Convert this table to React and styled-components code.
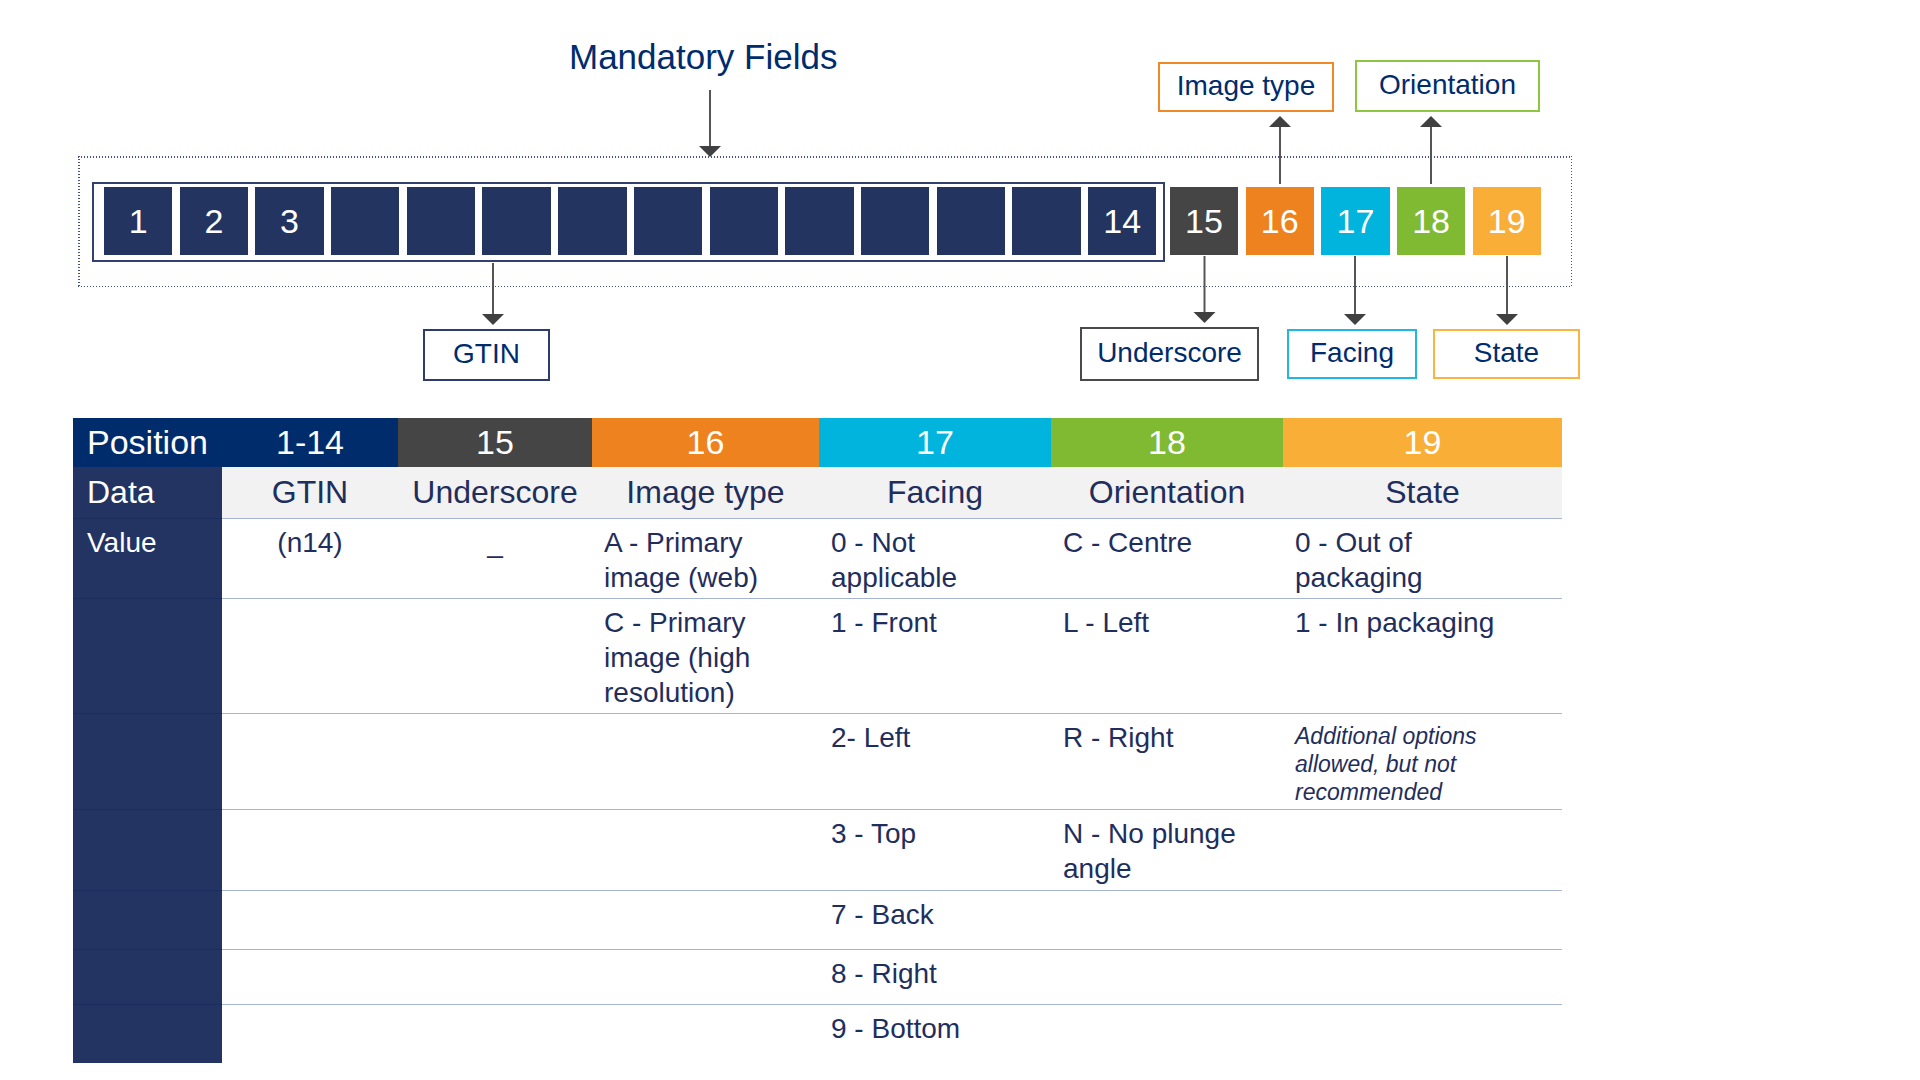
import React from 'react';
import styled, { createGlobalStyle } from 'styled-components';

const BLUE = '#002c6c';
const NAVY = '#233462';
const INK = '#1f2e5c';
const RULE = '#a8b5d2';
const DOT = '#41528a';

const GlobalStyle = createGlobalStyle`
  html, body {
    margin: 0;
    padding: 0;
    background: #ffffff;
  }
  body {
    font-family: "Liberation Sans", Arial, sans-serif;
  }
`;

const positions = [
  { n: 15, color: '#454545' },
  { n: 16, color: '#ee821e' },
  { n: 17, color: '#00b4de' },
  { n: 18, color: '#80ba32' },
  { n: 19, color: '#f9ae37' },
];

const callouts = [
  { text: 'Image type', left: 1158, top: 62, width: 176, height: 50, border: '#f0892a' },
  { text: 'Orientation', left: 1355, top: 60, width: 185, height: 52, border: '#8dc641' },
  { text: 'GTIN', left: 423, top: 329, width: 127, height: 52, border: '#2d3c6c' },
  { text: 'Underscore', left: 1080, top: 327, width: 179, height: 54, border: '#4a4a4a' },
  { text: 'Facing', left: 1287, top: 329, width: 130, height: 50, border: '#21b8e0' },
  { text: 'State', left: 1433, top: 329, width: 147, height: 50, border: '#f9b441' },
];

// x, start of the shaft, tip of the head
const arrows = [
  { x: 710, from: 90, to: 157 },
  { x: 493, from: 263, to: 325 },
  { x: 1204.5, from: 256, to: 323 },
  { x: 1355, from: 256, to: 325 },
  { x: 1507, from: 256, to: 325 },
  { x: 1280, from: 184, to: 116 },
  { x: 1431, from: 184, to: 116 },
];

const header = [
  { text: 'Position', bg: BLUE, left: true },
  { text: '1-14', bg: BLUE },
  ...positions.map((p) => ({ text: String(p.n), bg: p.color })),
];

const dataRow = ['GTIN', 'Underscore', 'Image type', 'Facing', 'Orientation', 'State'];

const valueRows = [
  ['(n14)', '_', 'A - Primary\nimage (web)', '0 - Not\napplicable', 'C - Centre', '0 - Out of\npackaging'],
  ['', '', 'C - Primary\nimage (high\nresolution)', '1 - Front', 'L - Left', '1 - In packaging'],
  ['', '', '', '2- Left', 'R - Right', { note: 'Additional options\nallowed, but not\nrecommended' }],
  ['', '', '', '3 - Top', 'N - No plunge\nangle', ''],
  ['', '', '', '7 - Back', '', ''],
  ['', '', '', '8 - Right', '', ''],
  ['', '', '', '9 - Bottom', '', ''],
];

const Arrow = ({ x, from, to }) => {
  const down = to > from;
  const base = down ? to - 11 : to + 11;
  return (
    <g>
      <line x1={x} y1={from} x2={x} y2={base} stroke="#555555" strokeWidth="2" />
      <polygon points={`${x - 11},${base} ${x + 11},${base} ${x},${to}`} fill="#404040" />
    </g>
  );
};

const App = () => {
  return (
    <Page>
      <GlobalStyle />
      <Diagram>
        <Title>Mandatory Fields</Title>
        <Frame>
          <Group>
            {Array.from({ length: 14 }, (_, i) => (
              <Cell key={i} $bg="#233461">
                {i < 3 || i === 13 ? i + 1 : ''}
              </Cell>
            ))}
          </Group>
          <Extras>
            {positions.map((p) => (
              <Cell key={p.n} $bg={p.color}>
                {p.n}
              </Cell>
            ))}
          </Extras>
        </Frame>
        {callouts.map((c) => (
          <Callout
            key={c.text}
            $left={c.left}
            $top={c.top}
            $width={c.width}
            $height={c.height}
            $border={c.border}
          >
            {c.text}
          </Callout>
        ))}
        <ArrowLayer width="1920" height="418" viewBox="0 0 1920 418">
          {arrows.map((a, i) => (
            <Arrow key={i} {...a} />
          ))}
        </ArrowLayer>
      </Diagram>

      <Table>
        {header.map((h) => (
          <HeadCell key={h.text} $bg={h.bg} $left={h.left}>
            {h.text}
          </HeadCell>
        ))}

        <DataCell $label>Data</DataCell>
        {dataRow.map((d) => (
          <DataCell key={d}>{d}</DataCell>
        ))}

        {valueRows.map((row, r) => {
          const last = r === valueRows.length - 1;
          return (
            <React.Fragment key={r}>
              <ValueCell $label $last={last}>
                {r === 0 ? 'Value' : ''}
              </ValueCell>
              {row.map((v, c) => (
                <ValueCell key={c} $last={last} $center={c < 2}>
                  {typeof v === 'object' ? <Note>{v.note}</Note> : v}
                </ValueCell>
              ))}
            </React.Fragment>
          );
        })}
      </Table>
    </Page>
  );
};

const Page = styled.div`
  width: 1920px;
  height: 1080px;
  overflow: hidden;
  background: #ffffff;
`;

const Diagram = styled.div`
  position: relative;
  box-sizing: border-box;
  height: 417.5px;
  padding-top: 156px;
`;

const Title = styled.div`
  position: absolute;
  left: 569px;
  top: 39px;
  font-size: 35px;
  line-height: 35px;
  color: ${BLUE};
  white-space: nowrap;
`;

const Frame = styled.div`
  box-sizing: border-box;
  margin-left: 78px;
  width: 1494px;
  height: 131px;
  padding: 26px 0 0 14px;
  display: flex;
  align-items: flex-start;
  background:
    linear-gradient(to right, ${DOT} 1.5px, transparent 1.5px) 0 0 / 3px 1.5px repeat-x,
    linear-gradient(to right, ${DOT} 1.5px, transparent 1.5px) 0 100% / 3px 1.5px repeat-x,
    linear-gradient(to bottom, ${DOT} 1.5px, transparent 1.5px) 0 0 / 1.5px 3px repeat-y,
    linear-gradient(to bottom, ${DOT} 1.5px, transparent 1.5px) 100% 0 / 1.5px 3px repeat-y;
`;

const Group = styled.div`
  display: flex;
  gap: 7.3px;
  padding: 3px 7px 5px 10px;
  border: 2px solid #34416e;
`;

const Extras = styled.div`
  display: flex;
  gap: 7.3px;
  margin: 5px 0 0 4.5px;
`;

const Cell = styled.div`
  width: 68.4px;
  height: 68.3px;
  flex: none;
  background: ${(p) => p.$bg};
  color: #ffffff;
  font-size: 34px;
  display: flex;
  align-items: center;
  justify-content: center;
`;

const Callout = styled.div`
  position: absolute;
  left: ${(p) => p.$left}px;
  top: ${(p) => p.$top}px;
  width: ${(p) => p.$width}px;
  height: ${(p) => p.$height}px;
  box-sizing: border-box;
  border: 2px solid ${(p) => p.$border};
  background: #ffffff;
  color: ${BLUE};
  font-size: 28px;
  padding-bottom: 3px;
  display: flex;
  align-items: center;
  justify-content: center;
  white-space: nowrap;
`;

const ArrowLayer = styled.svg`
  position: absolute;
  left: 0;
  top: 0;
  pointer-events: none;
`;

const Table = styled.div`
  margin-left: 73px;
  width: 1489px;
  display: grid;
  grid-template-columns: 149px 176px 194px 227px 232px 232px 279px;
  grid-template-rows: 49px 52px 80px 115px 96px 81px 59px 55px 58px;
`;

const HeadCell = styled.div`
  background: ${(p) => p.$bg};
  color: #ffffff;
  font-size: 34px;
  line-height: 49px;
  text-align: ${(p) => (p.$left ? 'left' : 'center')};
  padding-left: ${(p) => (p.$left ? '14px' : '0')};
  white-space: nowrap;
`;

const DataCell = styled.div`
  box-sizing: border-box;
  background: ${(p) => (p.$label ? NAVY : '#f2f2f2')};
  color: ${(p) => (p.$label ? '#ffffff' : INK)};
  font-size: 32px;
  line-height: 51px;
  text-align: ${(p) => (p.$label ? 'left' : 'center')};
  padding-left: ${(p) => (p.$label ? '14px' : '0')};
  border-bottom: 1px solid ${(p) => (p.$label ? '#1b2d5e' : RULE)};
  white-space: nowrap;
`;

const ValueCell = styled.div`
  box-sizing: border-box;
  background: ${(p) => (p.$label ? NAVY : '#ffffff')};
  color: ${(p) => (p.$label ? '#ffffff' : INK)};
  font-size: 28px;
  line-height: 35px;
  padding: 6px 0 0 ${(p) => (p.$label ? '14px' : p.$center ? '0' : '12px')};
  text-align: ${(p) => (p.$center ? 'center' : 'left')};
  white-space: pre-line;
  border-bottom: ${(p) => (p.$last ? 'none' : `1px solid ${p.$label ? '#1b2d5e' : RULE}`)};
`;

const Note = styled.span`
  display: block;
  padding-top: 2px;
  font-size: 23px;
  line-height: 28px;
  font-style: italic;
`;

export default App;
